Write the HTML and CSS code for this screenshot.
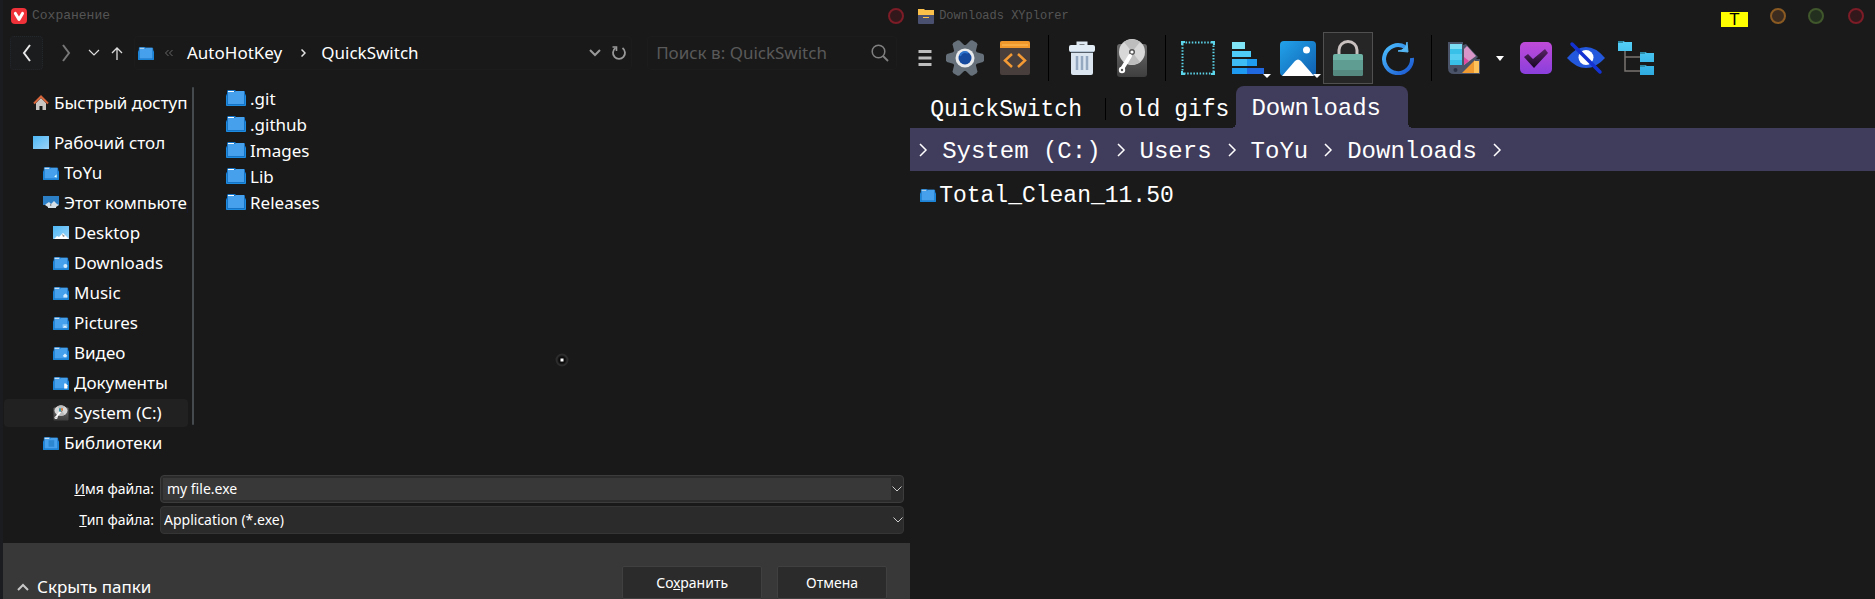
FILE: index.html
```html
<!DOCTYPE html>
<html lang="ru">
<head>
<meta charset="utf-8">
<title>Сохранение</title>
<link rel="stylesheet" href="styles.css">
</head>
<body>
<svg class="defs" aria-hidden="true">
  <defs>
    <linearGradient id="g-photo" x1="0" y1="0" x2="1" y2="1"><stop offset="0" stop-color="#22a3ea"/><stop offset="1" stop-color="#0f5fb0"/></linearGradient>
    <linearGradient id="g-sky" x1="0" y1="0" x2="1" y2="1"><stop offset="0" stop-color="#4db8f5"/><stop offset="1" stop-color="#9bd2f8"/></linearGradient>
    <linearGradient id="g-check" x1="0" y1="0" x2="0" y2="1"><stop offset="0" stop-color="#c04bd8"/><stop offset="1" stop-color="#8a3fdc"/></linearGradient>
    <linearGradient id="g-mark" x1="0" y1="0" x2="0" y2="1"><stop offset="0" stop-color="#5c2468"/><stop offset="1" stop-color="#14081f"/></linearGradient>
    <linearGradient id="g-ring" x1="0" y1="0" x2="1" y2="1"><stop offset="0" stop-color="#4cc0ff"/><stop offset="1" stop-color="#1a55d0"/></linearGradient>
    <linearGradient id="g-disk" x1="0" y1="0" x2="0" y2="1"><stop offset="0" stop-color="#6a6a6a"/><stop offset="1" stop-color="#3e3e3e"/></linearGradient>
    <linearGradient id="g-cyan" x1="0" y1="0" x2="0" y2="1"><stop offset="0" stop-color="#55d0f8"/><stop offset="1" stop-color="#2fabe0"/></linearGradient>
    <symbol id="folder" viewBox="0 0 20 16" preserveAspectRatio="none"><path d="M2 0h7l1 1h8a1 1 0 0 1 1 1v2l1 1v10a1 1 0 0 1-1 1H1a1 1 0 0 1-1-1V5l1-1V1z" fill="#1473c4"/><path d="M2 2h7l1-1h8v13H2z" fill="#46a0ec"/><path d="M0 6h1v9h18V6h1v9l-1 1H1l-1-1z" fill="#1c8be0"/><path d="M2 1h6v1H2z" fill="#fff"/></symbol>
    <symbol id="desk" viewBox="0 0 16 14"><path d="M0 0h16v13H0z" fill="url(#g-sky)"/></symbol>
    <symbol id="disk" viewBox="0 0 32 40" preserveAspectRatio="none"><rect x="1" y="6" width="30" height="33" rx="3" fill="url(#g-disk)"/><circle cx="16" cy="14" r="13" fill="#d8d8d8"/><path d="M16 14L8 4a13 13 0 0 1 16 0zM16 14l8 10a13 13 0 0 1-12 2z" fill="#bdbdbd"/><circle cx="16" cy="14" r="3" fill="#555"/><circle cx="16" cy="14" r="1.6" fill="#fff"/><path d="M14 18L6 31" stroke="#fff" stroke-width="4" stroke-linecap="round"/><circle cx="6" cy="32" r="3.2" fill="#fff"/><circle cx="6" cy="32" r="1.2" fill="#555"/></symbol>
  </defs>
</svg>

<div class="screen">
  <section class="dialog" aria-label="Сохранение">
    <header class="titlebar">
      <svg class="i16" viewBox="0 0 16 16"><rect width="16" height="16" rx="4" fill="#ef3139"/><path d="M4.4 5.4L8 11.4l3.5-6" fill="none" stroke="#fff" stroke-width="3" stroke-linecap="round" stroke-linejoin="round"/></svg>
      <span class="title">Сохранение</span>
      <button class="dot dot-red push" aria-label="Закрыть"></button>
    </header>

    <nav class="navbar">
      <button class="nav-btn back" aria-label="Назад"><svg width="10" height="18" viewBox="0 0 10 18"><path d="M8 1L2 9l6 8" fill="none" stroke="#e8e8e8" stroke-width="2"/></svg></button>
      <button class="nav-btn fwd" aria-label="Вперёд"><svg width="10" height="18" viewBox="0 0 10 18"><path d="M2 1l6 8-6 8" fill="none" stroke="#777" stroke-width="2"/></svg></button>
      <button class="nav-btn small" aria-label="Недавние"><svg width="12" height="8" viewBox="0 0 12 8"><path d="M1 1l5 5 5-5" fill="none" stroke="#ddd" stroke-width="1.2"/></svg></button>
      <button class="nav-btn small" aria-label="Вверх"><svg width="12" height="13" viewBox="0 0 12 13"><path d="M6 13V1M1 6l5-5 5 5" fill="none" stroke="#ddd" stroke-width="1.3"/></svg></button>
      <div class="address">
        <svg class="fold16" viewBox="0 0 20 16" preserveAspectRatio="none"><use href="#folder"/></svg>
        <svg class="laquo" viewBox="0 0 8 6"><path d="M3.5 0l-3 3 3 3M7.5 0l-3 3 3 3" fill="none" stroke="#666"/></svg>
        <a href="#">AutoHotKey</a>
        <svg class="sep" width="5" height="8" viewBox="0 0 5 8"><path d="M.5 0.5L4 4 .5 7.500" fill="none" stroke="#e4e4e4" stroke-width="1.5"/></svg>
        <a href="#">QuickSwitch</a>
        <button class="addr-btn push" aria-label="История"><svg width="12" height="8" viewBox="0 0 12 8"><path d="M1 1l5 5 5-5" fill="none" stroke="#999" stroke-width="2"/></svg></button>
        <button class="addr-btn" aria-label="Обновить"><svg width="16" height="16" viewBox="0 0 16 16"><path d="M4.500 3A6 6 0 1 0 11.500 3" fill="none" stroke="#999" stroke-width="1.800"/><path d="M1.500 2h4v4" fill="none" stroke="#999" stroke-width="1.600"/></svg></button>
      </div>
      <label class="search">
        <input type="text" placeholder="Поиск в: QuickSwitch" aria-label="Поиск">
        <svg width="18" height="18" viewBox="0 0 18 18"><circle cx="7.500" cy="7.500" r="6.300" fill="none" stroke="#808080" stroke-width="1.500"/><path d="M12 12l5 5" stroke="#808080" stroke-width="1.800"/></svg>
      </label>
    </nav>

    <div class="browse">
      <aside class="tree">
        <ul>
          <li class="l0 gap"><svg class="i16" viewBox="0 0 16 16"><path d="M3 8v7h3.500v-4h3v4H13V8L8 3z" fill="#c9c6c4"/><path d="M1 8.500l7-7 7 7" fill="none" stroke="#d9653a" stroke-width="2"/></svg><span>Быстрый доступ</span></li>
          <li class="l0"><svg class="i16" viewBox="0 0 16 14"><use href="#desk"/></svg><span>Рабочий стол</span></li>
          <li class="l1"><svg class="fold16" viewBox="0 0 20 16" preserveAspectRatio="none"><use href="#folder"/><path d="M14 12l3-3v4z" fill="#dff"/></svg><span>ToYu</span></li>
          <li class="l1"><svg class="i16" viewBox="0 0 16 14"><path d="M0 0h16v9H0z" fill="#2c7fc4"/><path d="M3 8l3-2 2 2 3-3 3 3 2 1-3 2v1H5v-1L2 9z" fill="#d4dfe8"/><path d="M7 8l2 1-2 1z" fill="#777"/></svg><span>Этот компьютер</span></li>
          <li class="l2"><svg class="i16" viewBox="0 0 16 14"><use href="#desk"/><path d="M1 13l3-3 2 1 4-4 3 3 3 3z" fill="#fff"/><path d="M9 8l3 2-2 1z" fill="#888"/></svg><span>Desktop</span></li>
          <li class="l2"><svg class="fold16" viewBox="0 0 20 16" preserveAspectRatio="none"><use href="#folder"/><circle cx="15.500" cy="11" r="2.500" fill="#cfeaff"/></svg><span>Downloads</span></li>
          <li class="l2"><svg class="fold16" viewBox="0 0 20 16" preserveAspectRatio="none"><use href="#folder"/><path d="M13 13v-3l2.500-2 2.500 2v3z" fill="#cfeaff"/></svg><span>Music</span></li>
          <li class="l2"><svg class="fold16" viewBox="0 0 20 16" preserveAspectRatio="none"><use href="#folder"/><path d="M12 9h6v4h-6z" fill="#8cc8f5"/><path d="M12 13l3-2 3 2z" fill="#fff"/></svg><span>Pictures</span></li>
          <li class="l2"><svg class="fold16" viewBox="0 0 20 16" preserveAspectRatio="none"><use href="#folder"/><path d="M12 11l3-3 3 3-3 2z" fill="#d8eeff"/></svg><span>Видео</span></li>
          <li class="l2"><svg class="fold16" viewBox="0 0 20 16" preserveAspectRatio="none"><use href="#folder"/><path d="M14 8h2l2 2v4h-4z" fill="#fff"/></svg><span>Документы</span></li>
          <li class="l2 current"><svg class="i16" viewBox="0 0 32 40" preserveAspectRatio="none"><use href="#disk"/><path d="M16 8h4v6h-4z" fill="#e07a3a"/><path d="M12 8h4v8h-4z" fill="#3c9aa8"/></svg><span>System (C:)</span></li>
          <li class="l1"><svg class="fold16" viewBox="0 0 20 16" preserveAspectRatio="none"><use href="#folder"/><path d="M7 4h7v8H7z" fill="#2c86d0"/></svg><span>Библиотеки</span></li>
        </ul>
      </aside>
      <div class="thumb"></div>
      <ul class="files">
        <li><svg class="fold20" viewBox="0 0 20 16"><use href="#folder"/></svg><span>.git</span></li>
        <li><svg class="fold20" viewBox="0 0 20 16"><use href="#folder"/></svg><span>.github</span></li>
        <li><svg class="fold20" viewBox="0 0 20 16"><use href="#folder"/></svg><span>Images</span></li>
        <li><svg class="fold20" viewBox="0 0 20 16"><use href="#folder"/></svg><span>Lib</span></li>
        <li><svg class="fold20" viewBox="0 0 20 16"><use href="#folder"/></svg><span>Releases</span></li>
      </ul>
      <svg class="pointer" viewBox="0 0 16 16"><circle cx="8" cy="8" r="5.500" fill="none" stroke="#2c2c2c" stroke-width="2"/><circle cx="8" cy="8" r="3.500" fill="#0c0c0c"/><path d="M6.500 6.500h3v3h-3z" fill="#fff"/></svg>
    </div>

    <form class="fields">
      <label for="fname"><u>И</u>мя файла:</label>
      <div class="combo name">
        <input id="fname" type="text" value="my file.exe">
        <button type="button" class="drop" aria-label="Список имён"><svg width="10" height="6" viewBox="0 0 10 6"><path d="M.5.5L5 5 9.500.5" fill="none" stroke="#ccc"/></svg></button>
      </div>
      <label for="ftype"><u>Т</u>ип файла:</label>
      <div class="combo">
        <select id="ftype"><option>Application (*.exe)</option></select>
        <svg class="drop-mark" width="10" height="6" viewBox="0 0 10 6"><path d="M.5.5L5 5 9.500.5" fill="none" stroke="#ccc"/></svg>
      </div>
    </form>

    <footer class="actions">
      <button class="toggle"><svg width="12" height="8" viewBox="0 0 12 8"><path d="M1 7l5-5 5 5" fill="none" stroke="#c8c8c8" stroke-width="2"/></svg>Скрыть папки</button>
      <button class="action save">Со<u>х</u>ранить</button>
      <button class="action cancel">Отмена</button>
    </footer>
  </section>

  <section class="manager" aria-label="XYplorer">
    <header class="titlebar">
      <svg class="i16" viewBox="0 0 16 16"><path d="M0 1h6l1 1h9v6H0z" fill="#fbc04a"/><path d="M0 7h16v8a1 1 0 0 1-1 1H1a1 1 0 0 1-1-1z" fill="#4a5170"/><path d="M5 9.500h6" stroke="#fbc04a"/></svg>
      <span class="title">Downloads XYplorer</span>
      <span class="badge push">T</span>
      <button class="dot dot-amber" aria-label="Свернуть"></button>
      <button class="dot dot-green" aria-label="Развернуть"></button>
      <button class="dot dot-red last" aria-label="Закрыть"></button>
    </header>

    <div class="toolbar">
      <button class="menu" aria-label="Меню"><svg width="14" height="18" viewBox="0 0 14 18"><path d="M.5 2.500h13M.5 9h13M.5 15.500h13" stroke="#bdbdbd" stroke-width="3"/></svg></button>
      <button class="tool" aria-label="Настройки"><svg width="38" height="38" viewBox="0 0 38 38"><g fill="#66707a"><circle cx="19" cy="19" r="13"/><path id="tooth" d="M0 16.500l1-1.500 7-2h22l7 2 1 1.500v5L37 23l-7 2H8l-7-2-1-1.500z"/><use href="#tooth" transform="rotate(60 19 19)"/><use href="#tooth" transform="rotate(120 19 19)"/></g><circle cx="19" cy="19" r="9.500" fill="#e9eaec"/><circle cx="19" cy="19" r="6.500" fill="#164a9f"/><path d="M14 17a5 5 0 0 1 8-3" stroke="#2f74cc" stroke-width="2" fill="none"/></svg></button>
      <button class="tool" aria-label="Скрипт"><svg width="30" height="34" viewBox="0 0 30 34"><rect width="30" height="34" rx="2" fill="#483e3b"/><path d="M2 0h26a2 2 0 0 1 2 2v5H0V2a2 2 0 0 1 2-2z" fill="#f0972c"/><path d="M2 4h26" stroke="#ffc15a" stroke-width="1"/><path d="M12 13l-7 6.500 7 6.500M18 13l7 6.500-7 6.500" fill="none" stroke="#f39a35" stroke-width="2.500"/></svg></button>
      <i class="rule"></i>
      <button class="tool" aria-label="Удалить"><svg width="26" height="34" viewBox="0 0 26 34"><path d="M9 4V2h8v2" fill="none" stroke="#dfe9f2" stroke-width="3"/><rect y="4" width="26" height="7" rx="2" fill="#e2ecf5"/><path d="M2 12h22v20a2 2 0 0 1-2 2H4a2 2 0 0 1-2-2z" fill="#dae5f0"/><path d="M2 11h22" stroke="#8fa5bb" stroke-width="1"/><path d="M8 15v14M13 15v14M18 15v14" stroke="#94a9c0" stroke-width="2.500"/></svg></button>
      <button class="tool" aria-label="Диск"><svg width="32" height="40" viewBox="0 0 32 40"><use href="#disk"/></svg></button>
      <i class="rule"></i>
      <button class="tool" aria-label="Выделение"><svg width="34" height="34" viewBox="0 0 34 34"><rect x="1.500" y="1.500" width="31" height="31" fill="none" stroke="#5cd5ea" stroke-width="2" stroke-dasharray="1.500 1.600"/><path d="M1 4V1h3M30 1h3v3M33 30v3h-3M4 33H1v-3" fill="none" stroke="#5cd5ea" stroke-width="2"/></svg></button>
      <button class="tool" aria-label="Сортировка"><svg width="32" height="34" viewBox="0 0 32 34"><path d="M0 1h13v7H0z" fill="#7fe4f5"/><path d="M0 10h19v6H0z" fill="#4fcdf8"/><path d="M0 18h25v7H0z" fill="#1f9cf0"/><path d="M0 18h15v7H0z" fill="#3dbcf5"/><path d="M0 27h32v6H0z" fill="#1f68e0"/><path d="M0 27h15v6H0z" fill="#1e9af0"/></svg><svg class="caret" viewBox="0 0 8 4"><path d="M0 0h8L4 4z" fill="#fff"/></svg></button>
      <button class="tool" aria-label="Просмотр"><svg width="36" height="36" viewBox="0 0 36 36"><rect width="36" height="35" rx="4" y="1" fill="url(#g-photo)"/><circle cx="26.500" cy="10" r="3.500" fill="#fff"/><path d="M2 36l13-15q3-3 6 0l13 15z" fill="#fff"/></svg><svg class="caret" viewBox="0 0 8 4"><path d="M0 0h8L4 4z" fill="#fff"/></svg></button>
      <button class="tool pressed" aria-label="Блокировка"><svg width="30" height="36" viewBox="0 0 30 36"><path d="M6 15V10a9 8.500 0 0 1 18 0v5" fill="none" stroke="#c9c0c0" stroke-width="3"/><rect y="14" width="30" height="22" rx="2" fill="#5f9d93"/><path d="M0 17a3 3 0 0 1 3-3h24a3 3 0 0 1 3 3v3H0z" fill="#6fb3a7"/><path d="M0 30h30v4a2 2 0 0 1-2 2H2a2 2 0 0 1-2-2z" fill="#55887f"/></svg></button>
      <button class="tool" aria-label="Обновить"><svg width="34" height="34" viewBox="0 0 34 34"><path d="M24 6A14 14 0 1 0 31 17" fill="none" stroke="url(#g-ring)" stroke-width="4"/><path d="M26 1l1 10-10-1q8-1 9-9z" fill="#55b8f5" stroke="#55b8f5"/></svg></button>
      <i class="rule"></i>
      <button class="tool" aria-label="Палитра"><svg width="34" height="34" viewBox="0 0 34 34"><path d="M1 1h15v3l3-1 12 13-2 2h4v15H7q-6 0-6-6z" fill="#4b5368"/><path d="M3 3h12v21H3z" fill="#38c0e8"/><path d="M3 3h12v5H3z" fill="#7ddff5"/><path d="M3 13h12v6H3z" fill="#55cdf0"/><path d="M17 8l3-3 9 10-12 9z" fill="#d795c8"/><path d="M17 16v8l5-4z" fill="#e04aa0"/><path d="M15 32l13-13v13z" fill="#f09a32"/><path d="M27 20h5v12h-5z" fill="#ffc35c"/><circle cx="8.500" cy="29" r="2" fill="#2b3145"/></svg></button>
      <button class="more" aria-label="Ещё"><svg width="8" height="5" viewBox="0 0 8 5"><path d="M0 0h8L4 5z" fill="#fff"/></svg></button>
      <button class="tool" aria-label="Отметить"><svg width="32" height="32" viewBox="0 0 32 32"><rect width="32" height="32" rx="5" fill="url(#g-check)"/><path d="M4 15l4-3 5 5L25 7l3 4-14 15z" fill="url(#g-mark)"/></svg></button>
      <button class="tool" aria-label="Скрытые"><svg width="38" height="34" viewBox="0 0 38 34"><path d="M0 17Q9 6 19 6t19 11Q29 27 19 27T0 17z" fill="#2357dc"/><circle cx="19" cy="16.500" r="7.500" fill="#fff"/><path d="M5 3l28 28" stroke="#1432d2" stroke-width="3.500" stroke-linecap="round"/></svg></button>
      <button class="tool" aria-label="Дерево"><svg width="36" height="36" viewBox="0 0 36 36"><path d="M7 11v20h16M7 17h16" fill="none" stroke="#7a7472" stroke-width="1.500"/><path d="M0 1h5l2 1h7v9H0zM22 12h5l2 1h7v9H22zM22 25h5l2 1h7v9H22z" fill="url(#g-cyan)"/><path d="M0 1h5v2H0zM22 12h5v2h-5zM22 25h5v2h-5z" fill="#2d8ba8"/></svg></button>
    </div>

    <div class="tabs" role="tablist">
      <button class="tab" role="tab">QuickSwitch</button>
      <button class="tab second" role="tab">old gifs</button>
      <button class="tab active" role="tab" aria-selected="true">Downloads</button>
    </div>

    <nav class="crumbs">
      <svg class="chev" viewBox="0 0 9 14"><path d="M1 1l6 6-6 6" fill="none" stroke="#fff" stroke-width="1.500"/></svg>
      <a href="#">System (C:)</a>
      <svg class="chev" viewBox="0 0 9 14"><path d="M1 1l6 6-6 6" fill="none" stroke="#fff" stroke-width="1.500"/></svg>
      <a href="#">Users</a>
      <svg class="chev" viewBox="0 0 9 14"><path d="M1 1l6 6-6 6" fill="none" stroke="#fff" stroke-width="1.500"/></svg>
      <a href="#">ToYu</a>
      <svg class="chev" viewBox="0 0 9 14"><path d="M1 1l6 6-6 6" fill="none" stroke="#fff" stroke-width="1.500"/></svg>
      <a href="#">Downloads</a>
      <svg class="chev" viewBox="0 0 9 14"><path d="M1 1l6 6-6 6" fill="none" stroke="#fff" stroke-width="1.500"/></svg>
    </nav>

    <ul class="listing">
      <li><svg class="fold16" viewBox="0 0 20 16" preserveAspectRatio="none"><use href="#folder"/></svg><span>Total_Clean_11.50</span></li>
    </ul>
  </section>
</div>
</body>
</html>
```
FILE: styles.css
```css
* { box-sizing: border-box; }

body {
  margin: 0;
  background: #191919;
  color: #fff;
  font: 17px/24px "Noto Sans", "Open Sans", sans-serif;
}

button, input, select { font: inherit; color: inherit; }
button { padding: 0; border: 0; background: none; }
a { color: inherit; text-decoration: none; }
ul { margin: 0; padding: 0; list-style: none; }
svg { display: block; flex: none; }

.defs { position: absolute; width: 0; height: 0; }
.i16 { width: 16px; height: 16px; }
.fold16 { width: 16px; height: 13px; }
.fold20 { width: 20px; height: 16px; }
.push { margin-left: auto; }

.screen { display: flex; min-height: 100vh; }

.dialog {
  flex: 0 0 48.54%;
  display: flex;
  flex-direction: column;
  border-left: 3px solid #1a1c1f;
  background: #191919;
}

.manager {
  flex: 1;
  min-width: 0;
  background: #1a1a1a;
  font: 24px/32px "Liberation Mono", monospace;
}

/* Title bars */
.titlebar {
  display: flex;
  align-items: center;
  height: 32px;
  padding: 0 6px 0 8px;
}
.title {
  margin-left: 5px;
  color: #555;
  font: 13px/16px "Liberation Mono", monospace;
}
.manager .titlebar { padding-right: 11px; }
.manager .title { font-size: 12px; }
.dot { width: 16px; height: 16px; border: 2px solid; border-radius: 50%; margin-left: 22px; }
.dot.push { margin-left: auto; }
.dot.last { margin-left: 24px; }
.dot-red { border-color: #7c1c26; background: #33181b; }
.dot-amber { border-color: #8a5a22; background: #3c2c20; }
.dot-green { border-color: #40572c; background: #24301f; }
.badge {
  width: 27px;
  height: 15px;
  margin-top: 6px;
  background: #ff0;
  color: #000;
  font: 17px/16px "Liberation Sans", sans-serif;
  text-align: center;
}

/* Navigation row */
.navbar {
  display: flex;
  align-items: center;
  height: 42px;
  padding: 0 13px 0 7px;
}
.nav-btn { display: grid; place-items: center; width: 33px; height: 34px; }
.back { border: 1px dotted #24272c; border-radius: 4px; background: #1b1c1e; margin-right: 6px; }
.small { width: 23px; }
.address, .search {
  display: flex;
  align-items: center;
  height: 34px;
  border: 1px solid #1c1c1c;
  border-radius: 4px;
}
.address { flex: 1; min-width: 0; margin-left: 6px; padding: 0 0 0 3px; }
.laquo { width: 8px; height: 6px; margin: 0 14px 0 11px; }
.sep { margin: 0 15px 0 19px; }
.addr-btn { display: grid; place-items: center; width: 24px; height: 32px; }
.addr-btn.push { margin-left: auto; }
.search { flex: 0 1 250px; min-width: 0; margin-left: 15px; padding: 0 7px 0 8px; }
.search input { flex: 1; width: 100%; min-width: 0; padding: 0; border: 0; background: none; outline: 0; }
.search input::placeholder { color: #5a5a5a; opacity: 1; }

/* Folder tree and file list */
.browse { position: relative; flex: 1; display: flex; }
.tree { width: 185px; padding-top: 15px; }
.tree li {
  display: flex;
  align-items: center;
  gap: 5px;
  height: 28px;
  margin: 0 0 2px 1px;
  overflow: hidden;
  white-space: nowrap;
  border-radius: 4px;
}
.tree .gap { margin-bottom: 12px; }
.tree span { overflow: hidden; }
.l0 { padding-left: 29px; }
.l1 { padding-left: 39px; }
.l2 { padding-left: 49px; }
.current { background: #212121; }
.thumb { width: 2px; height: 338px; margin: 13px 0 0 4px; border-radius: 1px; background: #454a4e; }
.files { padding: 12px 0 0 32px; }
.files li { display: flex; align-items: center; gap: 4px; height: 26px; }
.files svg { margin-bottom: 3px; }
.pointer { position: absolute; left: 551px; top: 278px; width: 16px; height: 16px; }

/* Name and type */
.fields {
  display: grid;
  grid-template-columns: 151px 1fr;
  gap: 3px 6px;
  padding: 0 6px 9px 0;
  font-size: 14px;
}
.fields label { align-self: center; text-align: right; }
.combo {
  position: relative;
  display: flex;
  height: 28px;
  border: 1px solid #353535;
  border-radius: 4px;
  background: #2b2b2b;
}
.name { padding: 2px 1px 2px 2px; border-color: #3c3c3c; }
.combo input { flex: 1; min-width: 0; padding: 0 4px; border: 0; background: #383838; outline: 0; }
.combo select { flex: 1; appearance: none; padding: 0 3px; border: 0; background: none; outline: 0; }
.drop { display: grid; place-items: center; width: 11px; }
.drop-mark { position: absolute; right: 0; top: 10px; }

/* Bottom strip */
.actions {
  display: flex;
  align-items: flex-start;
  height: 56px;
  padding: 23px 23px 0 14px;
  background: #383838;
}
.toggle { display: flex; align-items: center; gap: 8px; margin: 9px auto 0 0; }
.action {
  height: 33px;
  border: 1px solid #404040;
  border-radius: 2px;
  background: #2b2b2b;
  font-size: 14px;
}
.save { width: 140px; }
.cancel { width: 110px; margin-left: 15px; }

/* Toolbar */
.toolbar { display: flex; align-items: center; height: 52px; }
.menu { display: grid; place-items: center; width: 30px; height: 52px; }
.tool { position: relative; display: grid; place-items: center; width: 50px; height: 52px; }
.pressed { border: 1px solid #505050; background: #262626; }
.rule { width: 1px; height: 46px; margin: 0 7px 0 8px; background: #000; }
.rule:first-of-type { margin-right: 8px; }
.more { display: grid; place-items: center; width: 22px; }
.caret { position: absolute; right: 2px; bottom: 6px; width: 8px; height: 4px; }

/* Tabs */
.tabs { display: flex; height: 44px; padding-top: 2px; }
.tab { position: relative; padding: 8px 23px 2px 20px; font-size: 23px; }
.second { padding: 8px 7px 2px 14px; }
.second::before { content: ""; position: absolute; left: 0; top: 12px; width: 1px; height: 22px; background: #000; }
.active { padding: 7px 27px 3px 15px; border-radius: 8px 8px 0 0; background: #403c5c; font-size: 24px; }
.active::before, .active::after {
  content: "";
  position: absolute;
  bottom: 0;
  width: 5px;
  height: 5px;
}
.active::before { right: 100%; background: radial-gradient(circle at 0 0, transparent 5px, #403c5c 5px); }
.active::after { left: 100%; background: radial-gradient(circle at 100% 0, transparent 5px, #403c5c 5px); }

/* Path and listing */
.crumbs { display: flex; align-items: center; height: 43px; padding-left: 9px; background: #403c5c; }
.chev { width: 9px; height: 14px; }
.crumbs a { margin: 0 16px 0 14px; padding-top: 4px; }
.listing { padding: 7px 0 0 10px; font-size: 23px; }
.listing li { display: flex; align-items: center; gap: 3px; }
.listing span { padding-top: 2px; }
```
